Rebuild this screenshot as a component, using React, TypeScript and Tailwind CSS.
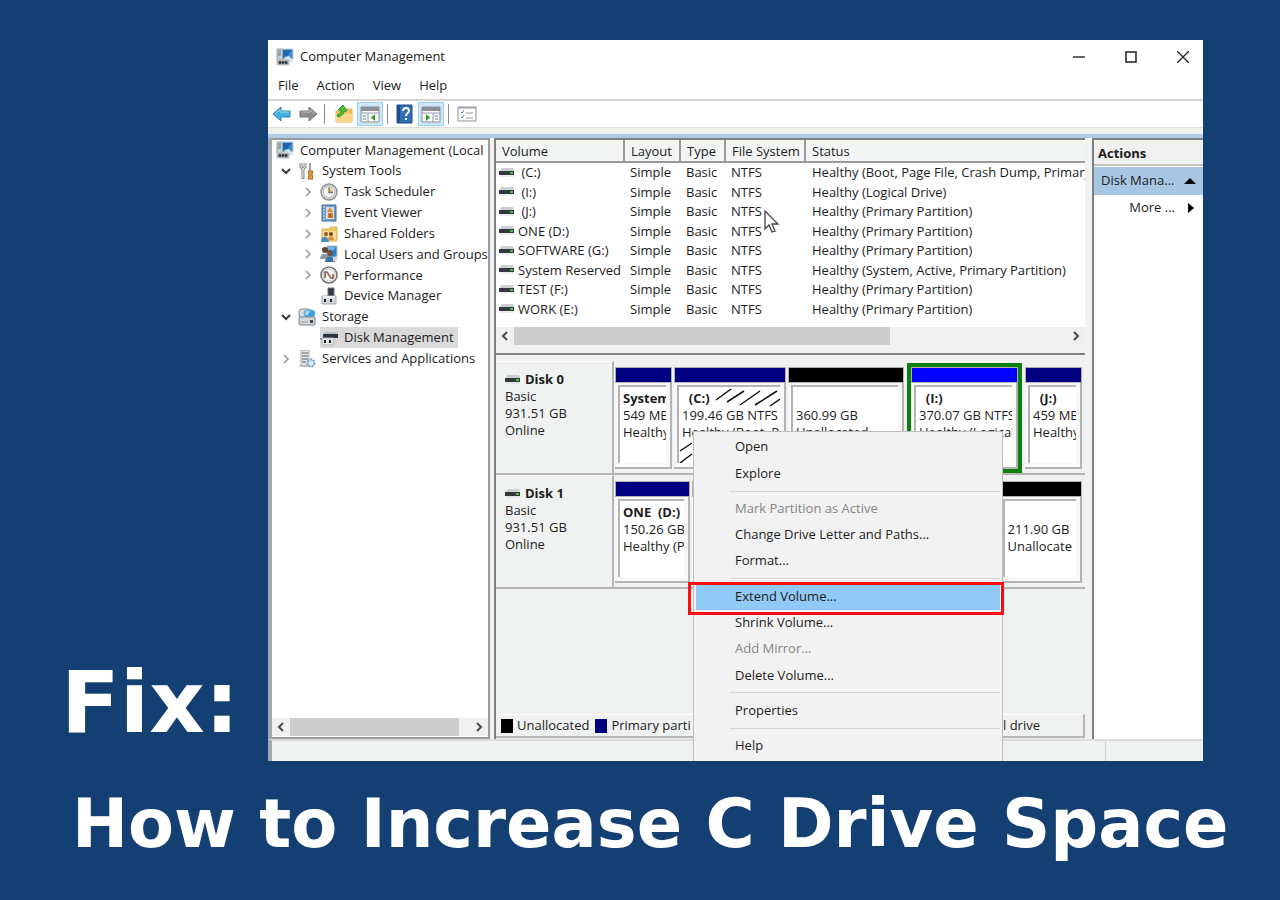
import React from "react";

type Volume = { name: string; status: string };

const volumes: Volume[] = [
  { name: " (C:)", status: "Healthy (Boot, Page File, Crash Dump, Primary" },
  { name: " (I:)", status: "Healthy (Logical Drive)" },
  { name: " (J:)", status: "Healthy (Primary Partition)" },
  { name: "ONE (D:)", status: "Healthy (Primary Partition)" },
  { name: "SOFTWARE (G:)", status: "Healthy (Primary Partition)" },
  { name: "System Reserved", status: "Healthy (System, Active, Primary Partition)" },
  { name: "TEST (F:)", status: "Healthy (Primary Partition)" },
  { name: "WORK (E:)", status: "Healthy (Primary Partition)" },
];

type IconName =
  | "computer"
  | "tools"
  | "clock"
  | "event"
  | "folder"
  | "users"
  | "performance"
  | "device"
  | "storage"
  | "disk"
  | "services";

type TreeNode = { label: string; icon: IconName; level: 0 | 1 | 2; open?: boolean; leaf?: boolean; selected?: boolean };

const tree: TreeNode[] = [
  { label: "Computer Management (Local", icon: "computer", level: 0 },
  { label: "System Tools", icon: "tools", level: 1, open: true },
  { label: "Task Scheduler", icon: "clock", level: 2 },
  { label: "Event Viewer", icon: "event", level: 2 },
  { label: "Shared Folders", icon: "folder", level: 2 },
  { label: "Local Users and Groups", icon: "users", level: 2 },
  { label: "Performance", icon: "performance", level: 2 },
  { label: "Device Manager", icon: "device", level: 2, leaf: true },
  { label: "Storage", icon: "storage", level: 1, open: true },
  { label: "Disk Management", icon: "disk", level: 2, leaf: true, selected: true },
  { label: "Services and Applications", icon: "services", level: 1 },
];

const indents = ["pl-1", "pl-2", "pl-[30px]"];

type MenuEntry = { label: string; disabled?: boolean; active?: boolean } | null;

// null is a separator
const menu: MenuEntry[] = [
  { label: "Open" },
  { label: "Explore" },
  null,
  { label: "Mark Partition as Active", disabled: true },
  { label: "Change Drive Letter and Paths..." },
  { label: "Format..." },
  null,
  { label: "Extend Volume...", active: true },
  { label: "Shrink Volume..." },
  { label: "Add Mirror...", disabled: true },
  { label: "Delete Volume..." },
  null,
  { label: "Properties" },
  null,
  { label: "Help" },
];

function TreeIcon({ name }: { name: IconName }) {
  return (
    <svg viewBox="0 0 18 18" className="h-[18px] w-[18px] shrink-0" aria-hidden="true">
      {name === "computer" && (
        <>
          <path d="M1 1h6v11H1z" fill="#c9ced3" stroke="#9aa1a7" />
          <path d="M2 3h3M2 5h3M2 7h3" stroke="#6e767d" />
          <path d="M6 1h11v10H6z" fill="#3f8fd0" stroke="#c3ccd4" />
          <path d="M7 2h9l-6 8H7z" fill="#1f67ad" />
          <path d="M8 9l5-1 5 6h-6z" fill="#d3e2ee" />
          <path d="M1 12h12v5H1z" fill="#8a9095" stroke="#c9cdd0" />
          <path d="M3 14.500h2M6 14.500h2M9 14.500h2" stroke="#222" strokeWidth="2" />
        </>
      )}
      {name === "tools" && (
        <>
          <path d="M3 1v4l2 2 2-2V1M5 7v10" fill="none" stroke="#8c9093" strokeWidth="3" />
          <path d="M3 1v4l2 2 2-2V1M5 7v9" fill="none" stroke="#e3e6e8" />
          <path d="M12 1v8" stroke="#9a9ea2" strokeWidth="2" />
          <path d="M10 9h5l-1 3 1 5h-5l1-5z" fill="#e39a3c" stroke="#b36b1c" />
        </>
      )}
      {name === "clock" && (
        <>
          <circle cx="9" cy="9" r="8" fill="#d7d9dc" stroke="#8e9195" strokeWidth="1.4" />
          <circle cx="9" cy="9" r="5.8" fill="#f6f5ee" stroke="#b5b8bb" />
          <path d="M9 9V4a5 5 0 0 1 4 6z" fill="#f0c57a" />
          <path d="M9 4.500v5h4" fill="none" stroke="#6b7177" strokeWidth="1.3" />
        </>
      )}
      {name === "event" && (
        <>
          <path d="M2 1h14v16H2z" fill="#6d9cc6" stroke="#3d6d99" />
          <path d="M6 3h8v12H6z" fill="#d5dde4" />
          <path d="M3 3h2M3 6h2M3 9h2M3 12h2M3 15h2" stroke="#d7e6f2" />
          <path d="M10 3l3 5H7z" fill="#e0882b" />
          <path d="M8 9h5v5H8z" fill="#d97a2d" />
          <path d="M10 10v3" stroke="#6b3d10" />
        </>
      )}
      {name === "folder" && (
        <>
          <path d="M2 4h7l2-2h6v14H2z" fill="#f0c766" stroke="#dcb355" />
          <path d="M3 6h13v8H3z" fill="#f8dc90" />
          <circle cx="6" cy="9" r="2" fill="#8a5a2a" />
          <circle cx="11" cy="9" r="2" fill="#6f4621" />
          <path d="M1 17c0-7 7-7 8 0z" fill="#4a8bc0" />
          <path d="M8 15c0-5 6-5 6 0z" fill="#d98c35" />
        </>
      )}
      {name === "users" && (
        <>
          <path d="M7 1h10v11H7z" fill="#2f7fc4" stroke="#b8c4cf" />
          <path d="M8 2h8l-6 7H8z" fill="#6db0e4" />
          <circle cx="5" cy="5" r="3" fill="#5b4636" />
          <circle cx="10" cy="8" r="3" fill="#6d5340" />
          <path d="M0 14c0-7 9-7 9 0z" fill="#8a98a5" />
          <path d="M5 17c0-7 10-7 10 0z" fill="#3a73a8" />
          <path d="M13 13h4v3h-4z" fill="#d3d7da" />
        </>
      )}
      {name === "performance" && (
        <>
          <circle cx="9" cy="9" r="8" fill="#fbfbfa" stroke="#74777a" strokeWidth="1.6" />
          <circle cx="9" cy="9" r="6" fill="none" stroke="#c3c5c7" />
          <path d="M5 12V6l2 0 4 6 2 0V8" fill="none" stroke="#8f5a44" strokeWidth="1.6" />
        </>
      )}
      {name === "device" && (
        <>
          <path d="M8 1h6v9H8z" fill="#32393f" stroke="#6f757a" />
          <path d="M2 9h14v8H2z" fill="#d4d7da" stroke="#a5a9ac" />
          <path d="M3 9h12v2H3z" fill="#f0f1f2" />
          <path d="M5 12v3M11 12v3" stroke="#22272b" strokeWidth="2" />
        </>
      )}
      {name === "storage" && (
        <>
          <rect x="1" y="1" width="12" height="9" rx="3" fill="#d9dde0" stroke="#858b90" />
          <rect x="6" y="2" width="11" height="7" rx="3" fill="#3aa2d8" stroke="#7bbbe0" />
          <path d="M8 3h4l-2 4H7z" fill="#a8dcf5" />
          <rect x="1" y="9" width="16" height="8" rx="1" fill="#d6d9dc" stroke="#7b8186" />
          <path d="M3 14h7" stroke="#92979b" />
          <path d="M12 12h3v3h-3z" fill="#3f464b" />
        </>
      )}
      {name === "disk" && (
        <>
          <path d="M5 3h12l1 3H3z" fill="#b7bbc0" />
          <path d="M3 5h15v4H3z" fill="#2d3240" />
          <path d="M2 9h12v7H2z" fill="#e3e5e7" stroke="#b3b6b9" />
          <path d="M5 11v3M10 11v3" stroke="#202529" strokeWidth="2" />
          <path d="M0 10h2" stroke="#555" />
        </>
      )}
      {name === "services" && (
        <>
          <path d="M3 0h8v16H3z" fill="#e2e6e9" stroke="#a9afb4" />
          <path d="M4 3h6M4 6h6M4 9h6M4 12h4" stroke="#59636b" />
          <circle cx="13" cy="13" r="3.500" fill="#d9eaf6" stroke="#6e9dc2" strokeWidth="2" strokeDasharray="2 1" />
          <path d="M1 16h9" stroke="#a0a5a9" />
        </>
      )}
    </svg>
  );
}

function DriveIcon() {
  return (
    <svg viewBox="0 0 16 10" className="h-[10px] w-4 shrink-0" aria-hidden="true">
      <path d="M2 0h12l1 3H1z" fill="#cdd0d3" />
      <path d="M0 3h15v4H0z" fill="#34373c" />
      <path d="M11 4h3v2h-3z" fill="#37c837" />
      <path d="M1 8h14" stroke="#d9dbdc" />
    </svg>
  );
}

function Chevron({ open }: { open?: boolean }) {
  return (
    <svg viewBox="0 0 12 12" className="h-3 w-3" fill="none" aria-hidden="true">
      {open ? (
        <path d="M2 4l4 4 4-4" stroke="#3c3c3c" strokeWidth="2" />
      ) : (
        <path d="M4 2l4 4-4 4" stroke="#9c9c9c" strokeWidth="1.6" />
      )}
    </svg>
  );
}

function ScrollBar({ thumb }: { thumb: string }) {
  return (
    <div className="flex h-[18px] items-center bg-[#f0f0f0]">
      <button type="button" aria-label="Scroll left" className="flex w-[18px] justify-center">
        <svg viewBox="0 0 8 10" className="h-[10px] w-2" fill="none">
          <path d="M6 1L2 5l4 4" stroke="#4a4a4a" strokeWidth="2" />
        </svg>
      </button>
      <div className="h-full flex-1">
        <div className={`h-full bg-[#cdcdcd] ${thumb}`} />
      </div>
      <button type="button" aria-label="Scroll right" className="flex w-[18px] justify-center">
        <svg viewBox="0 0 8 10" className="h-[10px] w-2" fill="none">
          <path d="M2 1l4 4-4 4" stroke="#4a4a4a" strokeWidth="2" />
        </svg>
      </button>
    </div>
  );
}

function Toolbar() {
  const divider = <span className="mx-1 h-5 w-px bg-[#8c8c8c]" />;
  return (
    <div className="flex h-7 items-center border-t-2 border-[#d4d4d4] pl-1">
      <button type="button" aria-label="Back" className="mr-[6px]">
        <svg viewBox="0 0 20 16" className="h-4 w-5">
          <path d="M1 8l8-7v4h9v6H9v4z" fill="#41b0de" stroke="#2b80ab" />
          <path d="M3 8l5-4v2h9" fill="none" stroke="#9bdcf4" />
        </svg>
      </button>
      <button type="button" aria-label="Forward" className="mr-[2px]">
        <svg viewBox="0 0 20 16" className="h-4 w-5">
          <path d="M19 8l-8-7v4H2v6h9v4z" fill="#8d8d8d" stroke="#777" />
          <path d="M17 8l-5-4v2H3" fill="none" stroke="#b9b9b9" />
        </svg>
      </button>
      {divider}
      <button type="button" aria-label="Up one level" className="mr-1 ml-[6px]">
        <svg viewBox="0 0 18 18" className="h-[18px] w-[18px]">
          <path d="M1 6h8l2-2h6v13H1z" fill="#efc468" stroke="#e3b75a" />
          <path d="M1 9h16v8H1z" fill="#f7d78a" />
          <path d="M3 12c4-1 6-3 6-6h3L8 0 3 5h3c0 3-1 4-4 5z" fill="#4cbf3c" stroke="#2f9226" />
        </svg>
      </button>
      <button type="button" aria-label="Show console tree" className="border border-[#99d1f5] bg-[#cce8fa] p-[2px]">
        <svg viewBox="0 0 20 18" className="h-[18px] w-5">
          <path d="M1 2h18v15H1z" fill="#fafafa" stroke="#8a8f94" />
          <path d="M1 2h18v4H1z" fill="#8a8f94" />
          <path d="M1 8h18M8 8v9" stroke="#9aa0a5" />
          <path d="M3 11h3M3 14h3" stroke="#4e86b8" />
          <path d="M15 9v7l-4-3.500z" fill="#24a324" />
        </svg>
      </button>
      {divider}
      <button type="button" aria-label="Help topics" className="mx-1">
        <svg viewBox="0 0 18 20" className="h-5 w-[18px]">
          <path d="M1 1h15v18H1z" fill="#2f6db4" stroke="#1e4f8b" />
          <path d="M1 1h3v18H1z" fill="#1e4f8b" />
          <path d="M7 7c0-4 6-4 6 0 0 2-3 2-3 5" fill="none" stroke="#fff" strokeWidth="2" />
          <path d="M9 14h2v2H9z" fill="#fff" />
        </svg>
      </button>
      <button type="button" aria-label="Show action pane" className="border border-[#99d1f5] bg-[#cce8fa] p-[2px]">
        <svg viewBox="0 0 20 18" className="h-[18px] w-5">
          <path d="M1 2h18v15H1z" fill="#fafafa" stroke="#8a8f94" />
          <path d="M1 2h18v4H1z" fill="#8a8f94" />
          <path d="M1 8h18M12 8v9" stroke="#9aa0a5" />
          <path d="M14 11h3M14 14h3" stroke="#4e86b8" />
          <path d="M5 9v7l4-3.500z" fill="#24a324" />
        </svg>
      </button>
      {divider}
      <button type="button" aria-label="Settings" className="ml-1">
        <svg viewBox="0 0 20 16" className="h-4 w-5">
          <path d="M1 1h18v14H1z" fill="#fcfcfc" stroke="#8f9499" />
          <path d="M1 2h18" stroke="#8f9499" />
          <path d="M4 6l1 1 2-3M4 11l1 1 2-3" fill="none" stroke="#3c8bd0" />
          <path d="M9 7h7M9 12h7" stroke="#9ca1a6" />
        </svg>
      </button>
    </div>
  );
}

type PartitionProps = {
  size: string;
  bar: string;
  title?: string;
  lines?: string[];
  hatched?: boolean;
  selected?: boolean;
};

function Partition({ size, bar, title, lines = [], hatched, selected }: PartitionProps) {
  return (
    <div className={`flex min-w-0 basis-0 flex-col ${size} ${selected ? "outline-4 outline-[#0c800c]" : ""}`}>
      <div className={`h-4 border border-[#b0b0b0] ${bar}`} />
      <div className="flex-1 border-r-2 border-b-2 border-[#b4b4b4] bg-[#f8f8f8] pt-[2px] pr-1 pb-1 pl-[3px]">
        <div className="relative h-full overflow-hidden border-t-2 border-l-2 border-[#b4b4b4] bg-white pt-[3px] pl-[3px] leading-[17px] whitespace-pre">
          {hatched && (
            <svg viewBox="0 0 102 78" className="absolute top-0 left-0 h-[78px] w-[102px]" stroke="#111" strokeWidth="1.500">
              <path d="M37 13L52 2M48 15L65 4M61 18L81 4M76 18L98 4M91 19L104 10M1 64L13 56M1 76L13 67" />
            </svg>
          )}
          <p className="relative h-[17px] font-bold">{title}</p>
          {lines.map((l) => (
            <p key={l} className="relative">{l}</p>
          ))}
        </div>
      </div>
    </div>
  );
}

function DiskRow({ name, children }: { name: string; children: React.ReactNode }) {
  return (
    <div className="flex h-[114px] border-b-2 border-[#b5b5b5]">
      <div className="w-[118px] shrink-0 border-t border-r-2 border-t-white border-r-[#b5b5b5] pt-[9px] pl-[9px] leading-[17px]">
        <p className="flex items-center gap-1 font-bold">
          <DriveIcon />
          {name}
        </p>
        <p>Basic</p>
        <p>931.51 GB</p>
        <p>Online</p>
      </div>
      <div className="flex min-w-0 flex-1 gap-[2px] pt-[6px] pr-[3px] pb-1 pl-px">{children}</div>
    </div>
  );
}

function ContextMenu() {
  return (
    <div
      role="menu"
      className="absolute top-[391px] left-[425px] flex h-[333px] w-[310px] flex-col border border-[#bdbdbd] bg-[#f2f2f2] pt-[2px] pb-1"
    >
      {menu.map((m, i) =>
        m ? (
          <div key={m.label} className="relative flex flex-1 px-[2px]">
            <button
              type="button"
              role="menuitem"
              disabled={m.disabled}
              className={`flex-1 pl-[39px] text-left ${m.active ? "bg-[#91c9f7]" : ""} ${m.disabled ? "text-[#858585]" : ""}`}
            >
              {m.label}
            </button>
            {m.active && (
              <span className="pointer-events-none absolute -top-px -right-[2px] -left-[6px] h-[33px] border-[3px] border-[#fb0d12]" />
            )}
          </div>
        ) : (
          <hr key={i} className="my-1 ml-9 mr-[2px] h-px border-[#d5d5d5]" />
        )
      )}
    </div>
  );
}

const ComputerManagement: React.FC = () => (
  <section className="relative min-w-0 flex-1 overflow-hidden bg-white font-['Open_Sans','Noto_Sans',sans-serif] text-[13px] font-medium text-[#1c1c1c]">
    <header className="flex h-[33px] items-center pl-2">
      <TreeIcon name="computer" />
      <h2 className="ml-[6px] flex-1">Computer Management</h2>
      <div className="flex items-center gap-10 pr-[14px]">
        <button type="button" aria-label="Minimize">
          <svg viewBox="0 0 12 12" className="h-3 w-3" stroke="#333" strokeWidth="1.500"><path d="M0 6h12" /></svg>
        </button>
        <button type="button" aria-label="Maximize">
          <svg viewBox="0 0 12 12" className="h-3 w-3" fill="none" stroke="#222" strokeWidth="1.500"><path d="M1 1h10v10H1z" /></svg>
        </button>
        <button type="button" aria-label="Close">
          <svg viewBox="0 0 12 12" className="h-3 w-3" stroke="#222" strokeWidth="1.300"><path d="M0 0l12 12M12 0L0 12" /></svg>
        </button>
      </div>
    </header>

    <nav className="flex h-[26px] items-center gap-[18px] pl-[10px]">
      {["File", "Action", "View", "Help"].map((m) => (
        <button key={m} type="button">{m}</button>
      ))}
    </nav>

    <Toolbar />
    <div className="h-[7px] border-t border-[#dedede] bg-[#f0f0f0]" />
    <div className="h-1 bg-[#b0cbe5]" />

    <div className="flex min-h-[601px] border-l-4 border-[#a3a8ae] bg-[#f0f2f4]">
      <aside className="flex w-[218px] shrink-0 flex-col border-t-2 border-r-2 border-b-2 border-[#9a9a9a] bg-white">
        <ul className="grid h-[229px] auto-rows-fr">
          {tree.map((n) => (
            <li key={n.label} className={`flex min-w-0 items-center gap-[6px] overflow-hidden whitespace-nowrap ${indents[n.level]}`}>
              {n.level > 0 && (
                <button type="button" aria-label={`Toggle ${n.label}`} className={`w-3 shrink-0 ${n.leaf ? "invisible" : ""}`}>
                  <Chevron open={n.open} />
                </button>
              )}
              <button
                type="button"
                className={`flex h-full items-center gap-[6px] ${n.selected ? "bg-[#d9d9d9] pr-1" : ""}`}
              >
                <TreeIcon name={n.icon} />
                {n.label}
              </button>
            </li>
          ))}
        </ul>
        <div className="mt-auto mb-px">
          <ScrollBar thumb="w-[94%]" />
        </div>
      </aside>

      <main className="ml-1 flex min-w-0 flex-1 flex-col border-t-2 border-l-2 border-[#808080] bg-[#f0f2f1]">
        <div className="relative flex flex-col border-b-2 border-[#808080] bg-white">
          <div className="overflow-hidden">
            <table className="w-full table-fixed text-left whitespace-pre">
              <colgroup>
                <col className="w-[128px]" />
                <col className="w-14" />
                <col className="w-[45px]" />
                <col className="w-20" />
                <col />
              </colgroup>
              <thead>
                <tr className="h-[22px] bg-[#f3f4f4]">
                  {["Volume", "Layout", "Type", "File System", "Status"].map((h) => (
                    <th key={h} scope="col" className="border-r-2 border-b-2 border-[#9a9a9a] p-0 pl-[6px] leading-5 font-medium last:border-r-0">
                      {h}
                    </th>
                  ))}
                </tr>
              </thead>
            </table>
            <table className="h-[156px] w-full table-fixed text-left whitespace-pre" aria-label="Volumes">
              <colgroup>
                <col className="w-[128px]" />
                <col className="w-14" />
                <col className="w-[45px]" />
                <col className="w-20" />
                <col />
              </colgroup>
              <tbody>
                {volumes.map((v) => (
                  <tr key={v.name} className="leading-[19px]">
                    <td className="p-0 pl-[3px]">
                      <span className="flex items-center gap-[3px]">
                        <DriveIcon />
                        {v.name}
                      </span>
                    </td>
                    <td className="p-0 pl-[6px]">Simple</td>
                    <td className="p-0 pl-[6px]">Basic</td>
                    <td className="p-0 pl-[6px]">NTFS</td>
                    <td className="overflow-hidden p-0 pl-[7px]">{v.status}</td>
                  </tr>
                ))}
              </tbody>
            </table>
          </div>
          <div className="mt-2 border-b-8 border-[#f0f2f1]">
            <ScrollBar thumb="w-[68%]" />
          </div>
          <svg viewBox="0 0 16 24" className="absolute top-[70px] left-[268px] h-6 w-4" aria-hidden="true">
            <path d="M1 1v18l4-4 3 7 3-1-3-7h6z" fill="#fff" stroke="#444" strokeWidth="1.300" />
          </svg>
        </div>

        <div className="flex-1 pt-[6px]">
          <DiskRow name="Disk 0">
            <Partition size="grow-[57]" bar="bg-[#000080]" title="System" lines={["549 MB", "Healthy"]} />
            <Partition size="grow-[112]" bar="bg-[#000080]" title="  (C:)" lines={["199.46 GB NTFS", "Healthy (Boot, P"]} hatched />
            <Partition size="grow-[116]" bar="bg-black" lines={["360.99 GB", "Unallocated"]} />
            <div className="flex min-w-0 grow-[107] basis-0 px-[5px]">
              <Partition size="grow" bar="bg-[#0000ff]" title="  (I:)" lines={["370.07 GB NTFS", "Healthy (Logical"]} selected />
            </div>
            <Partition size="grow-[57]" bar="bg-[#000080]" title="  (J:)" lines={["459 MB", "Healthy"]} />
          </DiskRow>
          <DiskRow name="Disk 1">
            <Partition size="grow-[75]" bar="bg-[#000080]" title="ONE  (D:)" lines={["150.26 GB", "Healthy (P"]} />
            <Partition size="grow-[153]" bar="bg-[#000080]" />
            <Partition size="grow-[153]" bar="bg-[#000080]" />
            <Partition size="grow-[83]" bar="bg-black" lines={["211.90 GB", "Unallocate"]} />
          </DiskRow>
        </div>

        <footer className="mb-px flex h-6 items-center gap-1 border-t border-r-2 border-b-2 border-t-white border-r-[#b5b5b5] border-b-[#b5b5b5] pl-[5px]">
          <span className="h-[14px] w-3 bg-black" />
          <span>Unallocated</span>
          <span className="ml-[2px] h-[14px] w-3 bg-[#000080]" />
          <span>Primary parti</span>
          <span className="mr-[43px] ml-auto">l drive</span>
        </footer>
      </main>

      <aside className="ml-[7px] w-[111px] shrink-0 border-t-2 border-l-2 border-[#808080] bg-white">
        <h3 className="h-[26px] border-b-2 border-[#c4c4c4] bg-[#f0f0f0] pl-1 leading-[26px] font-bold">Actions</h3>
        <button type="button" className="flex h-[29px] w-full items-center justify-between border-t border-white bg-[#a7c6e3] pr-[7px] pl-[7px]">
          Disk Mana...
          <svg viewBox="0 0 12 6" className="h-[6px] w-3"><path d="M0 6l6-6 6 6z" /></svg>
        </button>
        <button type="button" className="flex h-[26px] w-full items-center justify-end gap-3 pr-2">
          More ...
          <svg viewBox="0 0 8 10" className="h-[10px] w-2"><path d="M1 0l6 5-6 5z" /></svg>
        </button>
      </aside>
    </div>

    <footer className="flex h-[22px] justify-end border-t-2 border-l-4 border-t-[#dcdcdc] border-l-[#a3a8ae] bg-[#f0f1f1]">
      <span className="w-[98px] border-l border-[#cfcfcf]" />
    </footer>

    <ContextMenu />
  </section>
);

export default function App() {
  return (
    <div className="min-h-screen overflow-hidden bg-[#143f73] pt-10 text-white">
      <div className="flex pr-[77px]">
        <div className="flex w-[268px] shrink-0 items-end pb-4 pl-[61px] font-['DejaVu_Sans',sans-serif]">
          <h1 className="text-[86px] leading-none font-bold">Fix:</h1>
        </div>
        <ComputerManagement />
      </div>
      <p className="mt-[30px] pl-[72px] font-['DejaVu_Sans',sans-serif] text-[67px] leading-none font-bold whitespace-nowrap">
        How to Increase C Drive Space
      </p>
    </div>
  );
}
